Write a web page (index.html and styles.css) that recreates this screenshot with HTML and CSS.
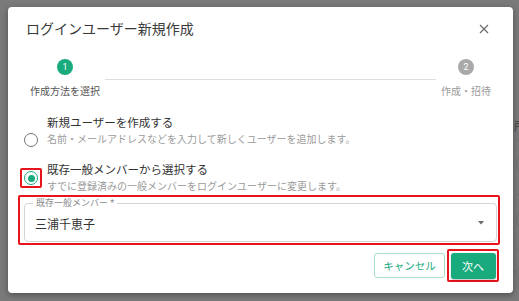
FILE: index.html
```html
<!DOCTYPE html>
<html lang="ja">
<head>
<meta charset="utf-8">
<title>ログインユーザー新規作成</title>
<link rel="stylesheet" href="styles.css">
</head>
<body>
<div class="scene">
  <section class="dialog">
    <header class="dlg-head">
      <h1 class="dlg-title">ログインユーザー新規作成</h1>
      <button class="close" aria-label="閉じる">
        <svg width="10" height="10" viewBox="0 0 10 10"><path d="M1 1L9 9M9 1L1 9" stroke="#6b6b6b" stroke-width="1.2" fill="none"/></svg>
      </button>
    </header>

    <div class="stepper">
      <div class="step step-first">
        <span class="step-icon active">1</span>
        <span class="step-label active">作成方法を選択</span>
      </div>
      <div class="connector"></div>
      <div class="step step-last">
        <span class="step-icon">2</span>
        <span class="step-label">作成・招待</span>
      </div>
    </div>

    <div class="options">
      <label class="option option-low">
        <span class="radio-hit"><span class="radio"></span></span>
        <span class="option-text">
          <span class="option-title">新規ユーザーを作成する</span>
          <span class="option-sub">名前・メールアドレスなどを入力して新しくユーザーを追加します。</span>
        </span>
      </label>
      <label class="option">
        <span class="radio-hit marked"><span class="radio checked"></span></span>
        <span class="option-text">
          <span class="option-title">既存一般メンバーから選択する</span>
          <span class="option-sub">すでに登録済みの一般メンバーをログインユーザーに変更します。</span>
        </span>
      </label>
    </div>

    <div class="field-mark">
      <fieldset class="field">
        <legend class="field-label">既存一般メンバー *</legend>
        <div class="select">
          <span class="select-value">三浦千恵子</span>
          <svg class="arrow" width="6" height="4" viewBox="0 0 6 4"><path d="M0 0H6L3 3.5Z" fill="#6a6a6a"/></svg>
        </div>
      </fieldset>
    </div>

    <footer class="actions">
      <button class="btn btn-outline">キャンセル</button>
      <span class="btn-mark"><button class="btn btn-primary">次へ</button></span>
    </footer>
  </section>
  <aside class="behind">
    <span class="behind-text">所</span>
    <span class="behind-line"></span>
    <span class="behind-dot"></span>
    <span class="behind-line"></span>
    <span class="behind-dot"></span>
    <span class="behind-line"></span>
    <span class="behind-dot"></span>
  </aside>
</div>
</body>
</html>
```

FILE: styles.css
```css
* { box-sizing: border-box; }

html, body {
  margin: 0;
  height: 100%;
}

body {
  background: #7a7a7a;
  font-family: "Roboto", "Noto Sans CJK JP", sans-serif;
  color: #333;
  overflow: hidden;
}

.scene {
  display: flex;
  height: 301px;
  padding: 7px 0 0 8px;
}

.dialog {
  width: 505px;
  height: 286px;
  flex: none;
  background: #fff;
  border-radius: 4px;
  box-shadow: 0 2px 6px rgba(0, 0, 0, 0.35);
  display: flex;
  flex-direction: column;
}

.dlg-head {
  display: flex;
  align-items: center;
  padding: 14px 24px 0 18px;
  height: 30px;
}

.dlg-title {
  margin: 0;
  font-size: 14px;
  line-height: 16px;
  font-weight: 400;
  color: #3a3a3a;
  flex: 1;
}

.close {
  border: 0;
  padding: 0;
  background: none;
  width: 10px;
  height: 10px;
  display: block;
}
.close svg { display: block; }

.stepper {
  display: flex;
  padding: 22px 22px 0 22px;
}

.step {
  display: flex;
  flex-direction: column;
  align-items: center;
}

.step-icon {
  width: 16px;
  height: 16px;
  border-radius: 50%;
  background: #a9a9a9;
  color: #fff;
  font-size: 9px;
  line-height: 16px;
  text-align: center;
}
.step-icon.active { background: #19ab7d; }

.step-label {
  margin-top: 10px;
  font-size: 10px;
  line-height: 14px;
  color: #9a9a9a;
  white-space: nowrap;
}
.step-label.active { color: #555; }

.connector {
  flex: 1;
  height: 1px;
  background: #dedede;
  margin: 20px 5px 0 5px;
}

.options {
  display: flex;
  flex-direction: column;
  gap: 15px;
  padding: 16px 0 0 12px;
}

.option {
  display: flex;
  align-items: center;
  gap: 5px;
}
.option-low { align-items: flex-end; }

.radio-hit {
  width: 22px;
  height: 20px;
  display: flex;
  align-items: center;
  justify-content: center;
  border: 2px solid transparent;
  border-radius: 2px;
}
.option-low .radio-hit { margin-bottom: -3px; }
.radio-hit.marked { border-color: #e8141b; }

.radio {
  width: 14px;
  height: 14px;
  border-radius: 50%;
  border: 1.6px solid #757575;
  display: flex;
  align-items: center;
  justify-content: center;
}
.radio.checked { border-color: #19ab7d; }
.radio.checked::after {
  content: "";
  width: 7px;
  height: 7px;
  border-radius: 50%;
  background: #19ab7d;
}

.option-text {
  display: flex;
  flex-direction: column;
}

.option-title {
  font-size: 11.5px;
  line-height: 17px;
  color: #333;
}

.option-sub {
  font-size: 10px;
  line-height: 15px;
  color: #9b9b9b;
  white-space: nowrap;
}

.field-mark {
  margin: 1px 13px 0 10px;
  border: 2px solid #e8141b;
  border-radius: 2px;
  padding: 1px 1px 1px 4px;
}

.field {
  margin: 0;
  padding: 0 12px 0 10px;
  border: 1px solid #d4d4d4;
  border-radius: 4px;
}

.field-label {
  margin-left: -2px;
  padding: 0 3px;
  font-size: 9px;
  line-height: 10px;
  color: #8a8a8a;
}

.select {
  display: flex;
  align-items: center;
  justify-content: space-between;
  height: 33px;
  padding-bottom: 3px;
}

.select-value {
  font-size: 12px;
  color: #333;
}

.arrow { display: block; }

.actions {
  display: flex;
  justify-content: flex-end;
  align-items: flex-start;
  gap: 2px;
  padding: 4px 14px 0 0;
}

.btn {
  font-family: inherit;
  border-radius: 3px;
  padding: 0;
}

.btn-outline {
  margin-top: 4px;
  width: 71px;
  height: 25px;
  background: #fff;
  border: 1px solid #a7dcc7;
  color: #19ab7d;
  font-size: 10.5px;
}

.btn-mark {
  display: block;
  border: 2px solid #e8141b;
  border-radius: 2px;
  padding: 2px 1.5px 1px;
}

.btn-primary {
  display: block;
  width: 45px;
  height: 26px;
  background: #19ab7d;
  border: 0;
  color: #fff;
  font-size: 11px;
  box-shadow: 0 1px 2px rgba(0, 0, 0, 0.25);
}

.behind {
  flex: 1;
  overflow: hidden;
  display: flex;
  flex-direction: column;
  padding: 112px 0 0 1px;
  white-space: nowrap;
}

.behind-text {
  font-size: 12px;
  line-height: 16px;
  color: #3c3c3c;
}

.behind-line {
  height: 1px;
  background: #6e6e6e;
  margin: 4px 0 0 -2px;
}

.behind-dot {
  width: 20px;
  height: 20px;
  border-radius: 50%;
  border: 1px solid #6f6f6f;
  margin: 14px 0 16px 2px;
}
```
